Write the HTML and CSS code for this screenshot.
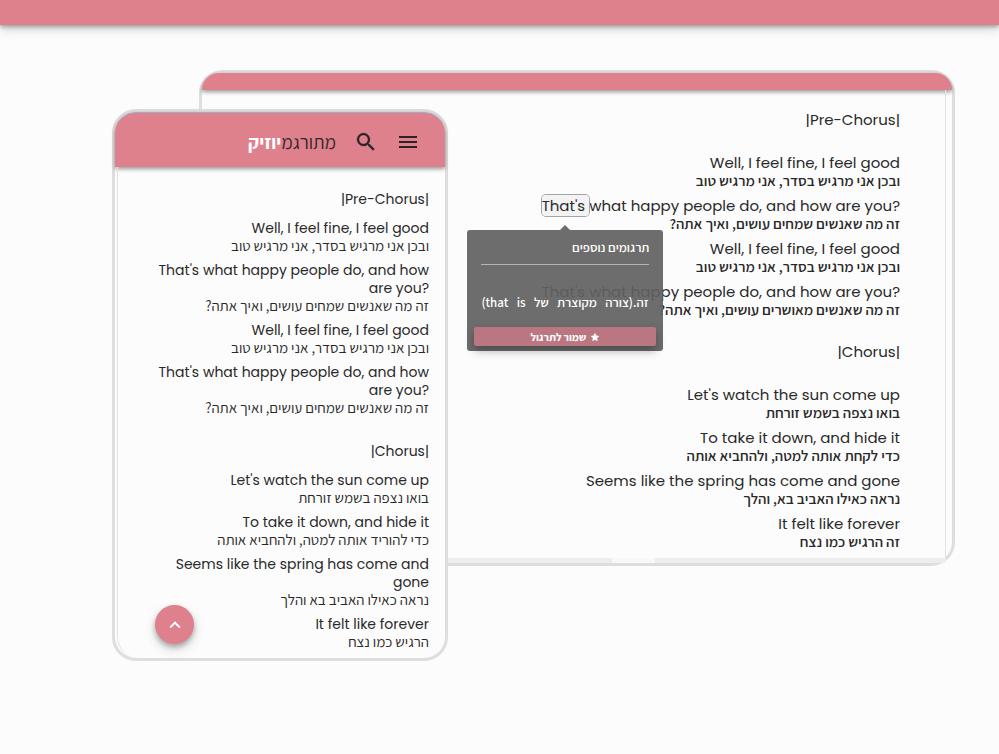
FILE: index.html
```
<!DOCTYPE html>
<html lang="he" dir="rtl">
<head>
<meta charset="utf-8">
<meta name="viewport" content="width=device-width, initial-scale=1">
<title>מתורגמיוזיק</title>
<link rel="stylesheet" href="styles.css">
</head>
<body>
<header class="site-bar"></header>
<main class="showcase">
  <section class="device desktop">
    <div class="desktop-bar"></div>
    <div class="desktop-page">
      <h2 class="part">|Pre-Chorus|</h2>
      <div class="verse">
        <div class="line"><p class="en" dir="ltr">Well, I feel fine, I feel good</p><p class="he">ובכן אני מרגיש בסדר, אני מרגיש טוב</p></div>
        <div class="line"><p class="en" dir="ltr"><span class="word">That's <span class="tooltip" dir="rtl"><span class="tooltip-title">תרגומים נוספים</span><span class="tooltip-text">זה.(צורה מקוצרת של that is)</span><button class="save" type="button"><svg class="star" viewBox="0 0 24 24" aria-hidden="true"><path d="M12 1.500l3.200 7 7.300.9-5.400 5.100 1.400 7.500L12 18.300 5.500 22l1.400-7.500L1.500 9.400l7.300-.9z"/></svg>שמור לתרגול</button></span></span>what happy people do, and how are you?</p><p class="he">זה מה שאנשים שמחים עושים, ואיך אתה?</p></div>
        <div class="line"><p class="en" dir="ltr">Well, I feel fine, I feel good</p><p class="he">ובכן אני מרגיש בסדר, אני מרגיש טוב</p></div>
        <div class="line"><p class="en" dir="ltr">That's what happy people do, and how are you?</p><p class="he">זה מה שאנשים מאושרים עושים, ואיך אתה?</p></div>
      </div>
      <h2 class="part">|Chorus|</h2>
      <div class="verse">
        <div class="line"><p class="en" dir="ltr">Let's watch the sun come up</p><p class="he">בואו נצפה בשמש זורחת</p></div>
        <div class="line"><p class="en" dir="ltr">To take it down, and hide it</p><p class="he">כדי לקחת אותה למטה, ולהחביא אותה</p></div>
        <div class="line"><p class="en" dir="ltr">Seems like the spring has come and gone</p><p class="he">נראה כאילו האביב בא, והלך</p></div>
        <div class="line"><p class="en" dir="ltr">It felt like forever</p><p class="he">זה הרגיש כמו נצח</p></div>
      </div>
    </div>
    <div class="desktop-foot"><span class="foot-gap"></span></div>
  </section>

  <section class="device phone">
    <header class="phone-bar">
      <button class="icon-button" type="button" aria-label="תפריט"><svg class="icon" viewBox="0 0 24 24" aria-hidden="true"><path d="M3 18h18v-2H3v2zm0-5h18v-2H3v2zm0-7v2h18V6H3z"/></svg></button>
      <button class="icon-button" type="button" aria-label="חיפוש"><svg class="icon icon-search" viewBox="0 0 24 24" aria-hidden="true"><path d="M15.500 14h-.79l-.28-.27A6.471 6.471 0 0 0 16 9.500 6.500 6.500 0 1 0 9.500 16c1.610 0 3.090-.59 4.230-1.570l.27.28v.79l5 4.990L20.490 19l-4.990-5zm-6 0C7.010 14 5 11.990 5 9.500S7.010 5 9.500 5 14 7.010 14 9.500 11.990 14 9.500 14z"/></svg></button>
      <a class="logo" href="#">מתורגמ<span class="logo-end">יוזיק</span></a>
    </header>
    <div class="phone-page">
      <h2 class="part">|Pre-Chorus|</h2>
      <div class="verse">
        <div class="line"><p class="en" dir="ltr">Well, I feel fine, I feel good</p><p class="he">ובכן אני מרגיש בסדר, אני מרגיש טוב</p></div>
        <div class="line"><p class="en" dir="ltr">That's what happy people do, and how are you?</p><p class="he">זה מה שאנשים שמחים עושים, ואיך אתה?</p></div>
        <div class="line"><p class="en" dir="ltr">Well, I feel fine, I feel good</p><p class="he">ובכן אני מרגיש בסדר, אני מרגיש טוב</p></div>
        <div class="line"><p class="en" dir="ltr">That's what happy people do, and how are you?</p><p class="he">זה מה שאנשים שמחים עושים, ואיך אתה?</p></div>
      </div>
      <h2 class="part">|Chorus|</h2>
      <div class="verse">
        <div class="line"><p class="en" dir="ltr">Let's watch the sun come up</p><p class="he">בואו נצפה בשמש זורחת</p></div>
        <div class="line"><p class="en" dir="ltr">To take it down, and hide it</p><p class="he">כדי להוריד אותה למטה, ולהחביא אותה</p></div>
        <div class="line"><p class="en" dir="ltr">Seems like the spring has come and gone</p><p class="he">נראה כאילו האביב בא והלך</p></div>
        <div class="line"><p class="en" dir="ltr">It felt like forever</p><p class="he">הרגיש כמו נצח</p></div>
      </div>
    </div>
    <button class="to-top" type="button" aria-label="למעלה"><svg class="chevron" viewBox="0 0 24 24" aria-hidden="true"><path d="M12 8l-6 6 1.410 1.410L12 10.830l4.590 4.580L18 14z"/></svg></button>
  </section>
</main>
</body>
</html>
```
FILE: styles.css
```
* { box-sizing: border-box; }

:root {
  --pink: #df808d;
  --edge: #dedede;
  --paper: #fcfcfc;
  --ink: #292929;
}

body {
  margin: 0;
  background: var(--paper);
  color: var(--ink);
  font-family: Poppins, Assistant, "Open Sans", sans-serif;
}

p, h2 { margin: 0; }

button {
  border: 0;
  padding: 0;
  font: inherit;
  color: inherit;
  background: none;
  cursor: pointer;
}

.site-bar {
  height: 25px;
  background: var(--pink);
  box-shadow: 0 2px 4px rgba(0, 0, 0, .3), 0 5px 12px rgba(0, 0, 0, .14);
}

.showcase {
  display: grid;
  direction: ltr;
  padding: 45px 44px 40px 112px;
}

.device {
  grid-area: 1 / 1;
  align-self: start;
  direction: rtl;
  border: 3px solid var(--edge);
  background: var(--paper);
}

.desktop {
  margin-left: 87px;
  border-radius: 24px;
}

.desktop-bar {
  height: 17px;
  border-radius: 21px 21px 0 0;
  background: var(--pink);
  box-shadow: 0 2px 4px rgba(0, 0, 0, .4);
}

.desktop-page {
  margin-right: 6px;
  padding: 18px 45px 7px 0;
  border-right: 1px solid #e2e2e2;
}

.part {
  font-weight: 400;
  line-height: 24px;
}

.verse {
  display: grid;
}

.en {
  line-height: 18px;
  text-align: right;
}

.he {
  font-family: Assistant, "Open Sans", sans-serif;
  font-size: 15px;
  line-height: 18px;
}

.desktop .part,
.desktop .en { font-size: 15px; }
.desktop .he { font-weight: 600; }
.desktop .verse { gap: 7px; padding: 22px 0 21px; }
.desktop .verse:last-child { padding-bottom: 0; }

.desktop-foot {
  display: flex;
  justify-content: center;
  height: 5px;
  margin-right: 6px;
  border-radius: 0 0 12px 21px;
  background: #ededed;
}

.foot-gap {
  width: 43px;
  margin-left: 118px;
  background: #f8f8f8;
}

.word {
  position: relative;
  border-radius: 4px;
  background: #f3f3f3;
  box-shadow: 0 0 0 1px #a5a5a5;
}

.tooltip {
  position: absolute;
  z-index: 2;
  top: 100%;
  left: 50%;
  display: grid;
  width: 196px;
  margin: 14px 0 0 -98px;
  padding: 7px 7px 5px;
  border-radius: 3px;
  background: rgba(97, 97, 97, .92);
  color: #fff;
  font-size: 13px;
  font-weight: 600;
  font-family: Assistant, "Open Sans", sans-serif;
}

.tooltip::before {
  content: "";
  position: absolute;
  bottom: 100%;
  left: 50%;
  margin-left: -5px;
  border: 5px solid transparent;
  border-top: 0;
  border-bottom-color: #6d6d6d;
}

.tooltip-title {
  margin: 0 7px;
  padding: 2px 0 7px;
  border-bottom: 1px solid #b5b5b5;
  line-height: 18px;
}

.tooltip-text {
  padding: 28px 8px 15px 7px;
  line-height: 19px;
  text-align: justify;
  text-align-last: justify;
}

.save {
  display: flex;
  align-items: center;
  justify-content: center;
  gap: 4px;
  height: 19px;
  border-radius: 2px;
  background: #ba7781;
  box-shadow: 0 5px 10px rgba(0, 0, 0, .3);
  font-size: 11px;
  font-weight: 700;
}

.star {
  width: 10px;
  height: 10px;
  fill: #fff;
}

.phone {
  position: relative;
  width: 336px;
  margin-top: 39px;
  border-radius: 24px;
}

.phone-bar {
  display: flex;
  align-items: center;
  height: 55px;
  padding: 3px 25px 0;
  border-top: 1px solid #a5a9c4;
  border-radius: 21px 21px 0 0;
  background: var(--pink);
  box-shadow: 0 2px 4px rgba(0, 0, 0, .4);
}

.icon-button {
  display: flex;
  margin-left: 18px;
}

.icon {
  width: 24px;
  height: 24px;
  fill: #2b2326;
}

.icon-search {
  stroke: #2b2326;
  stroke-width: .3;
}

.logo {
  color: #33282b;
  font: 500 19px/24px Assistant, "Open Sans", sans-serif;
  text-decoration: none;
}

.logo-end {
  color: #fff;
  font-weight: 700;
}

.phone-page {
  margin-left: 2px;
  padding: 20px 16px 7px 20px;
  border-left: 1px solid #e2e2e2;
  border-radius: 0 0 0 21px;
}

.phone .part,
.phone .en { font-size: 14px; }
.phone .verse { gap: 6px; padding: 8px 0 22px; }
.phone .verse:last-child { padding-bottom: 0; }

.to-top {
  position: absolute;
  bottom: 14px;
  left: 40px;
  display: grid;
  place-items: center;
  width: 39px;
  height: 39px;
  border-radius: 50%;
  background: var(--pink);
  box-shadow: 0 3px 5px rgba(0, 0, 0, .25), 0 5px 12px rgba(0, 0, 0, .16);
}

.chevron {
  width: 22px;
  height: 22px;
  fill: #fff;
}
```
